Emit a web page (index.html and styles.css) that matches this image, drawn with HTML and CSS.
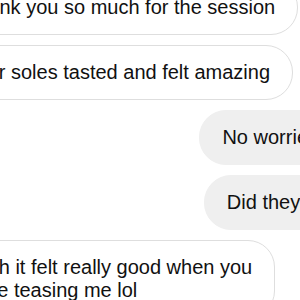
FILE: index.html
```html
<!DOCTYPE html>
<html lang="en">
<head>
  <meta charset="UTF-8">
  <meta name="viewport" content="width=device-width, initial-scale=1.0">
  <title>Messages</title>
  <link rel="stylesheet" href="styles.css">
</head>
<body>
  <!-- Message thread (cropped view) -->
  <div class="thread">
    <div class="msg in">Thank you so much for the session</div>
    <div class="msg in">Your soles tasted and felt amazing</div>
    <div class="msg out">No worries</div>
    <div class="msg out">Did they :)</div>
    <div class="msg in">Yeah it felt really good when you<br>were teasing me lol</div>
  </div>
</body>
</html>
```

FILE: styles.css
```css
/* Global Styles */
html, body {
  margin: 0;
  height: 100%;
  overflow: hidden;
  background-color: #fff;
}

body {
  font-family: 'Liberation Sans', Arial, sans-serif;
  color: #111;
}

/* Thread - wider than the window, so bubbles are cut at the edges */
.thread {
  display: flex;
  flex-direction: column;
  gap: 10px;
  margin: -20px -41px 0 -58px;
}

/* Message bubbles */
.msg {
  font-size: 20px;
  line-height: 23px;
  padding: 15px 22px;
  border-radius: 27px;
  white-space: nowrap;
}

.msg.in {
  align-self: flex-start;
  background-color: #fff;
  border: 1px solid #dedede;
}

.msg.out {
  align-self: flex-end;
  background-color: #efefef;
  border: 1px solid #efefef;
}
```
